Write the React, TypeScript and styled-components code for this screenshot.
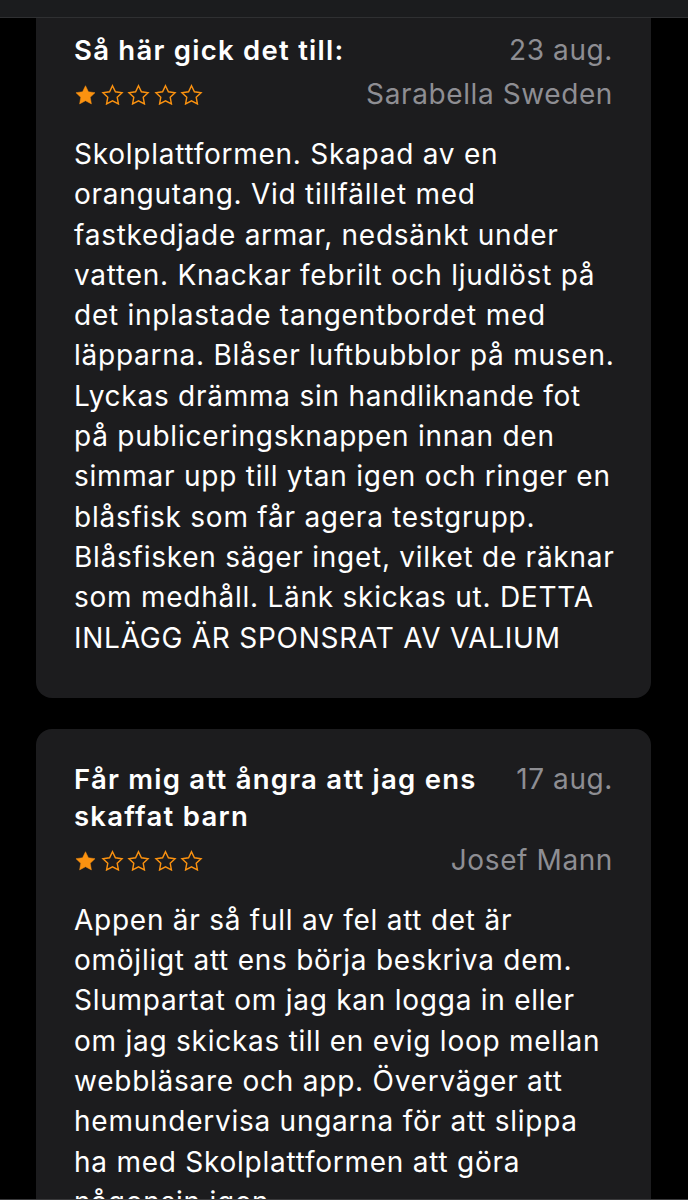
import React from "react";
import styled, { createGlobalStyle } from "styled-components";

const GlobalStyle = createGlobalStyle`
  html, body {
    margin: 0;
    padding: 0;
    background: #000;
  }
  body {
    font-family: Inter, "Noto Sans", "Liberation Sans", sans-serif;
    -webkit-font-smoothing: antialiased;
  }
`;

const TopBar = styled.div`
  position: fixed;
  top: 0;
  left: 0;
  right: 0;
  height: 17px;
  background: #1b1c1e;
  border-bottom: 1px solid #2f3032;
  z-index: 2;
`;

const BottomBar = styled.div`
  position: fixed;
  bottom: 0;
  left: 0;
  right: 0;
  height: 1px;
  background: #3a3a3c;
  z-index: 2;
`;

const Page = styled.main`
  padding: 0 37px 0 36px;
  display: flex;
  flex-direction: column;
  gap: 31px;
`;

const Card = styled.article`
  background: #1c1c1e;
  border-radius: 16px;
  padding: 32px 38px 40px;
  color: #fff;
`;

const HeadRow = styled.div`
  display: flex;
  justify-content: space-between;
  align-items: flex-start;
  gap: 24px;
`;

const Title = styled.h2`
  margin: 0;
  font-size: 27.5px;
  font-weight: 600;
  line-height: 37px;
  color: #fff;
  letter-spacing: 1.25px;
`;

const Muted = styled.span`
  font-size: 28px;
  line-height: 37px;
  color: #8e8e93;
  white-space: nowrap;
  font-weight: 400;
  letter-spacing: 0.6px;
`;

const MetaRow = styled.div`
  margin-top: 7px;
  display: flex;
  justify-content: space-between;
  align-items: center;
  height: 37px;
`;

const Stars = styled.div`
  display: flex;
  gap: 3.5px;
  align-items: center;
`;

const Body = styled.div`
  margin-top: 21px;
  font-size: 28px;
  line-height: 40.3px;
  color: #fff;
  letter-spacing: 0.75px;
`;

const Line = styled.div`
  white-space: nowrap;
`;

const STAR = "M12 1.8l3.05 6.35 6.95.95-5.05 4.85 1.25 6.9L12 17.55l-6.2 3.3 1.25-6.9L2 9.1l6.95-.95z";

const Star = ({ filled }: { filled: boolean }) => (
  <svg width="23" height="21" viewBox="0 0 24 22" aria-hidden>
    <path
      d={STAR}
      fill={filled ? "#fb9210" : "none"}
      stroke="#fb9210"
      strokeWidth={filled ? 0.5 : 1.5}
      strokeLinejoin="miter"
    />
  </svg>
);

type Review = {
  title: string;
  date: string;
  author: string;
  rating: number;
  lines: string[];
};

const reviews: Review[] = [
  {
    title: "Så här gick det till:",
    date: "23 aug.",
    author: "Sarabella Sweden",
    rating: 1,
    lines: [
      "Skolplattformen. Skapad av en",
      "orangutang. Vid tillfället med",
      "fastkedjade armar, nedsänkt under",
      "vatten. Knackar febrilt och ljudlöst på",
      "det inplastade tangentbordet med",
      "läpparna. Blåser luftbubblor på musen.",
      "Lyckas drämma sin handliknande fot",
      "på publiceringsknappen innan den",
      "simmar upp till ytan igen och ringer en",
      "blåsfisk som får agera testgrupp.",
      "Blåsfisken säger inget, vilket de räknar",
      "som medhåll. Länk skickas ut. DETTA",
      "INLÄGG ÄR SPONSRAT AV VALIUM",
    ],
  },
  {
    title: "Får mig att ångra att jag ens skaffat barn",
    date: "17 aug.",
    author: "Josef Mann",
    rating: 1,
    lines: [
      "Appen är så full av fel att det är",
      "omöjligt att ens börja beskriva dem.",
      "Slumpartat om jag kan logga in eller",
      "om jag skickas till en evig loop mellan",
      "webbläsare och app. Överväger att",
      "hemundervisa ungarna för att slippa",
      "ha med Skolplattformen att göra",
      "någonsin igen.",
    ],
  },
];

const TitleText = styled.span`
  display: block;
  max-width: 420px;
`;

export default function App() {
  return (
    <>
      <GlobalStyle />
      <TopBar />
      <Page>
        {reviews.map((r) => (
          <Card key={r.title}>
            <HeadRow>
              <Title>
                <TitleText>{r.title}</TitleText>
              </Title>
              <Muted>{r.date}</Muted>
            </HeadRow>
            <MetaRow>
              <Stars>
                {[0, 1, 2, 3, 4].map((i) => (
                  <Star key={i} filled={i < r.rating} />
                ))}
              </Stars>
              <Muted>{r.author}</Muted>
            </MetaRow>
            <Body>
              {r.lines.map((l, i) => (
                <Line key={i}>{l}</Line>
              ))}
            </Body>
          </Card>
        ))}
      </Page>
      <BottomBar />
    </>
  );
}
